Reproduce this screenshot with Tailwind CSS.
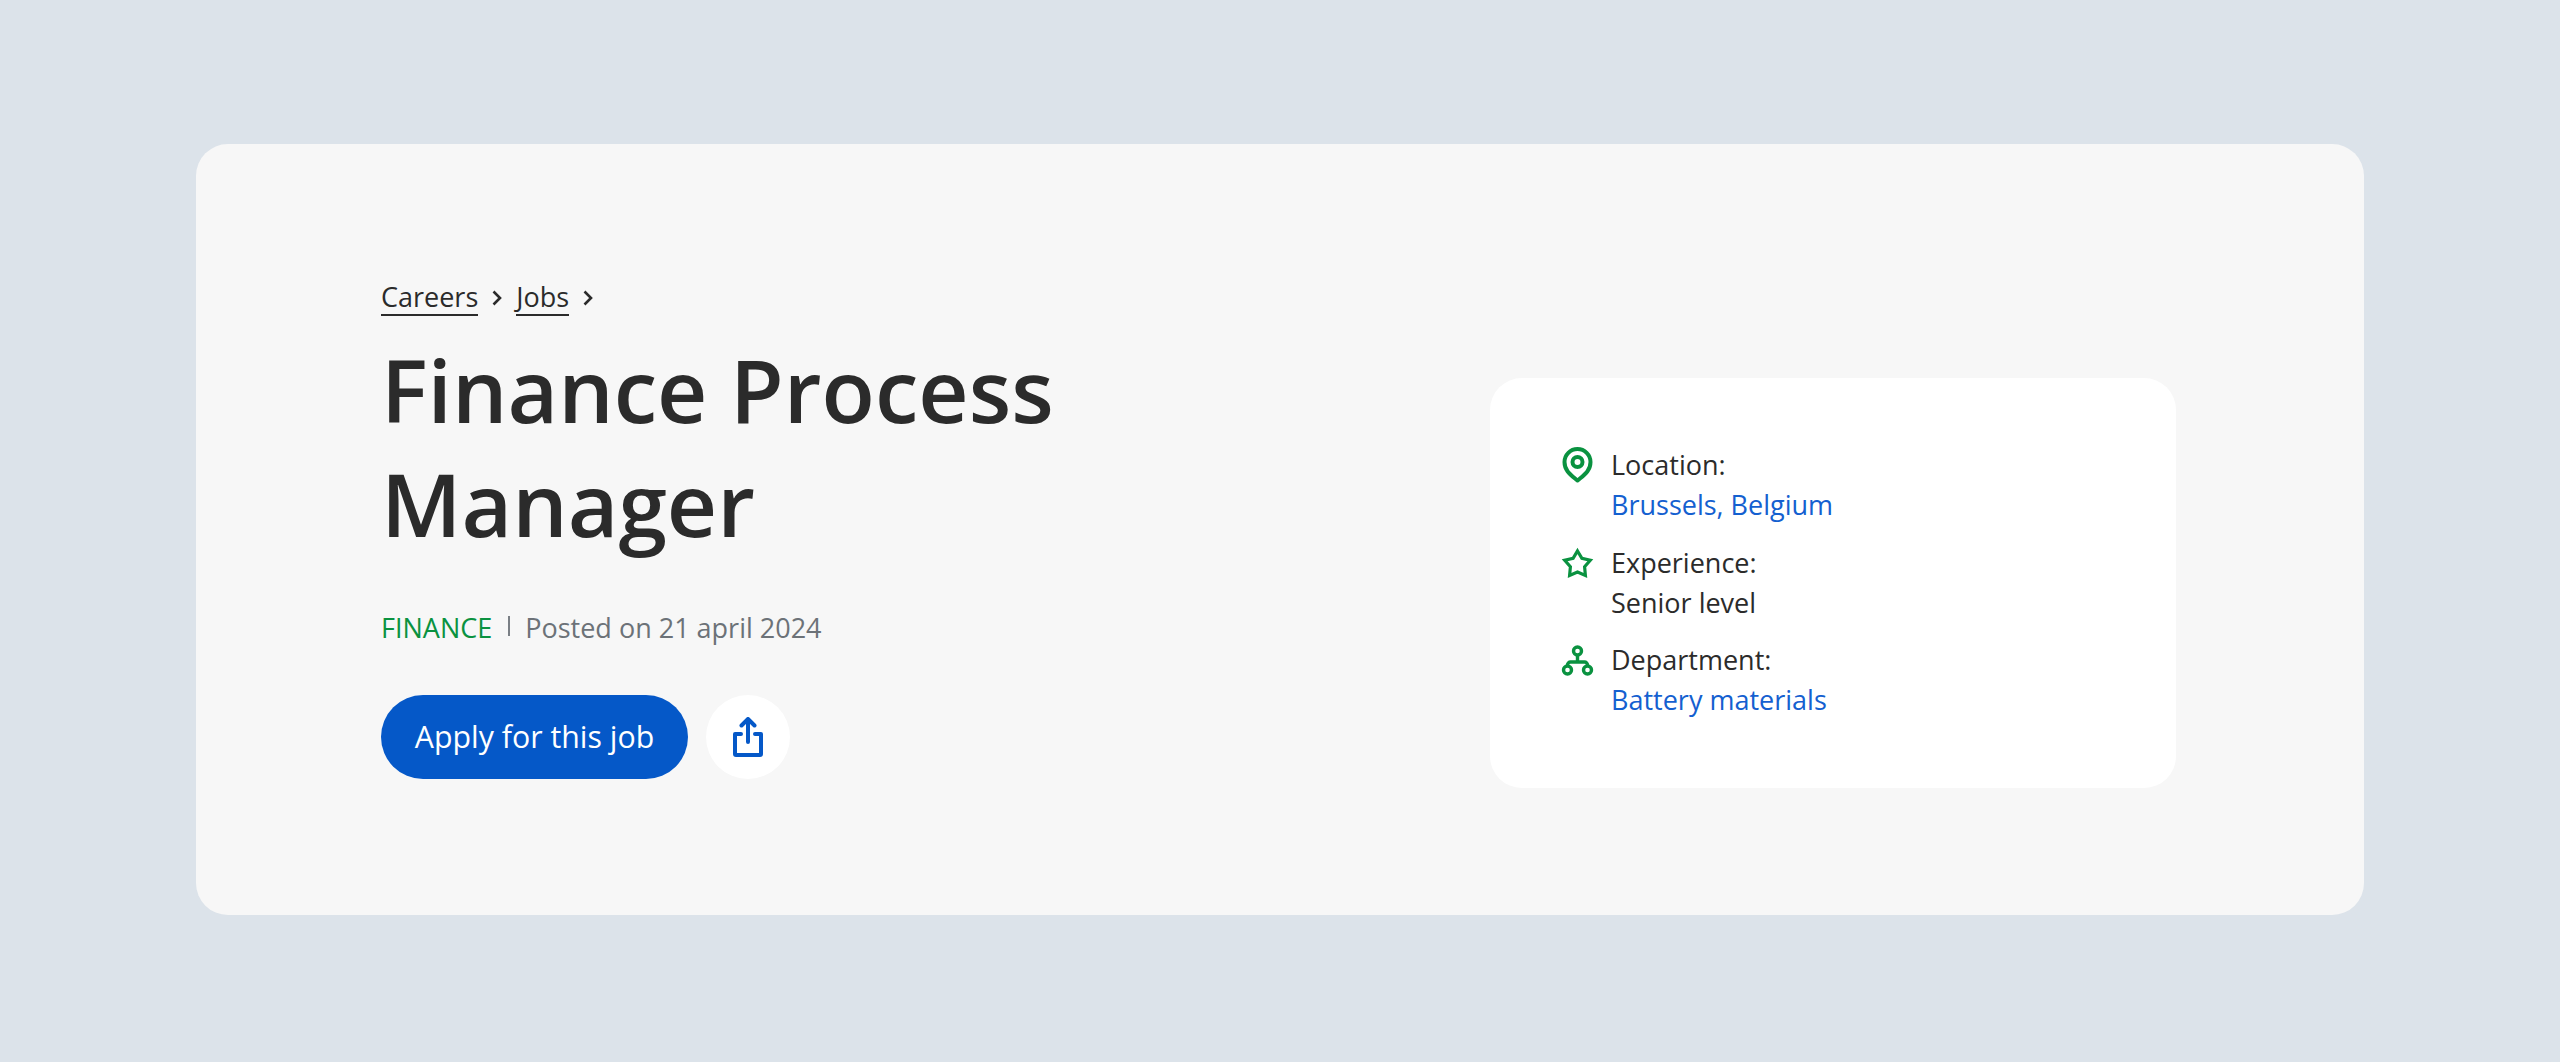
<!DOCTYPE html>
<html lang="en">
<head>
    <meta charset="UTF-8">
    <title>Finance Process Manager</title>
    <script src="https://cdn.jsdelivr.net/npm/@tailwindcss/browser@4"></script>
</head>
<body class="bg-[#dce3ea] font-['Open_Sans',sans-serif] text-[#2b2b2b]">
    <div class="pt-[144px] pl-[196px] h-[1062px]">
        <section class="w-[2168px] h-[771px] rounded-[32px] bg-[#f7f7f7] pl-[185px] pr-[188px] flex items-start justify-between">
            <div class="w-[800px] pt-[136px]">
                <nav class="flex items-center text-[27px] leading-[38px]">
                    <a href="#" class="border-b-2 border-[#2b2b2b] leading-[34px]">Careers</a>
                    <svg class="mx-[14px] w-[10px] h-[16px]" viewBox="0 0 10 16" fill="none" stroke="#2b2b2b" stroke-width="2.6"><path d="M1.500 1.500L8 8l-6.500 6.500"/></svg>
                    <a href="#" class="border-b-2 border-[#2b2b2b] leading-[34px]">Jobs</a>
                    <svg class="mx-[14px] w-[10px] h-[16px]" viewBox="0 0 10 16" fill="none" stroke="#2b2b2b" stroke-width="2.6"><path d="M1.500 1.500L8 8l-6.500 6.500"/></svg>
                </nav>
                <h1 class="mt-[17px] text-[87.4px] leading-[114px] font-semibold">Finance Process Manager</h1>
                <div class="mt-[48px] flex items-center text-[27px] leading-[38px]">
                    <span class="text-[#0a9240]">FINANCE</span>
                    <span class="ml-[16px] mr-[15px] w-[2px] h-[20px] bg-[#7a7f85] mb-[4px]"></span>
                    <span class="text-[#6c7278]">Posted on 21 april 2024</span>
                </div>
                <div class="mt-[48px] flex items-center gap-[18px]">
                    <a href="#" class="h-[84px] w-[307px] rounded-full bg-[#0558c8] text-white text-[30.300px] flex items-center justify-center">Apply for this job</a>
                    <button class="w-[84px] h-[84px] rounded-full bg-white flex items-center justify-center">
                        <svg class="w-[30px] h-[40px]" viewBox="0 0 30 40" fill="none" stroke="#0558c8" stroke-width="4" stroke-linecap="round" stroke-linejoin="round"><path d="M8 17H2v20a1 1 0 0 0 1 1h24a1 1 0 0 0 1-1V17h-6"/><path d="M15 25V2M8.500 8.500L15 2l6.500 6.500"/></svg>
                    </button>
                </div>
            </div>
            <aside class="mt-[234px] w-[686px] h-[410px] rounded-[32px] bg-white pl-[72px] pt-[67px] flex flex-col gap-[17.5px] text-[27px] leading-[40px]">
                <div class="flex gap-[18px]">
                    <svg class="w-[31px] h-[40px] shrink-0 overflow-visible" viewBox="0 0 31 40" fill="none" stroke="#0a9240" stroke-width="4"><path d="M15.500 35.500C9 30 2.500 26 2.500 17a13 13 0 0 1 26 0c0 9-6.500 13-13 18.500z" stroke-linejoin="round"/><circle cx="15.500" cy="17" r="5"/></svg>
                    <div><p>Location:</p><a href="#" class="text-[#1460d0]">Brussels, Belgium</a></div>
                </div>
                <div class="flex gap-[18px]">
                    <svg class="w-[31px] h-[40px] shrink-0 overflow-visible" viewBox="0 0 31 40" fill="none" stroke="#0a9240" stroke-width="3.200"><path d="M15.500 8L19.900 15.400 28.300 17.300 22.600 23.800 23.400 32.400 15.500 29 7.600 32.400 8.400 23.800 2.700 17.300 11.100 15.400z"/></svg>
                    <div><p>Experience:</p><p>Senior level</p></div>
                </div>
                <div class="flex gap-[18px]">
                    <svg class="w-[31px] h-[40px] shrink-0 overflow-visible" viewBox="0 0 31 40" fill="none" stroke="#0a9240" stroke-width="3.400"><g transform="translate(0 4)"><circle cx="15.500" cy="7" r="4"/><circle cx="5.500" cy="26" r="4"/><circle cx="25.500" cy="26" r="4"/><path d="M15.500 11v7M5.500 22v-1a3 3 0 0 1 3-3h14a3 3 0 0 1 3 3v1"/></g></svg>
                    <div><p>Department:</p><a href="#" class="text-[#1460d0]">Battery materials</a></div>
                </div>
            </aside>
        </section>
    </div>
</body>
</html>
